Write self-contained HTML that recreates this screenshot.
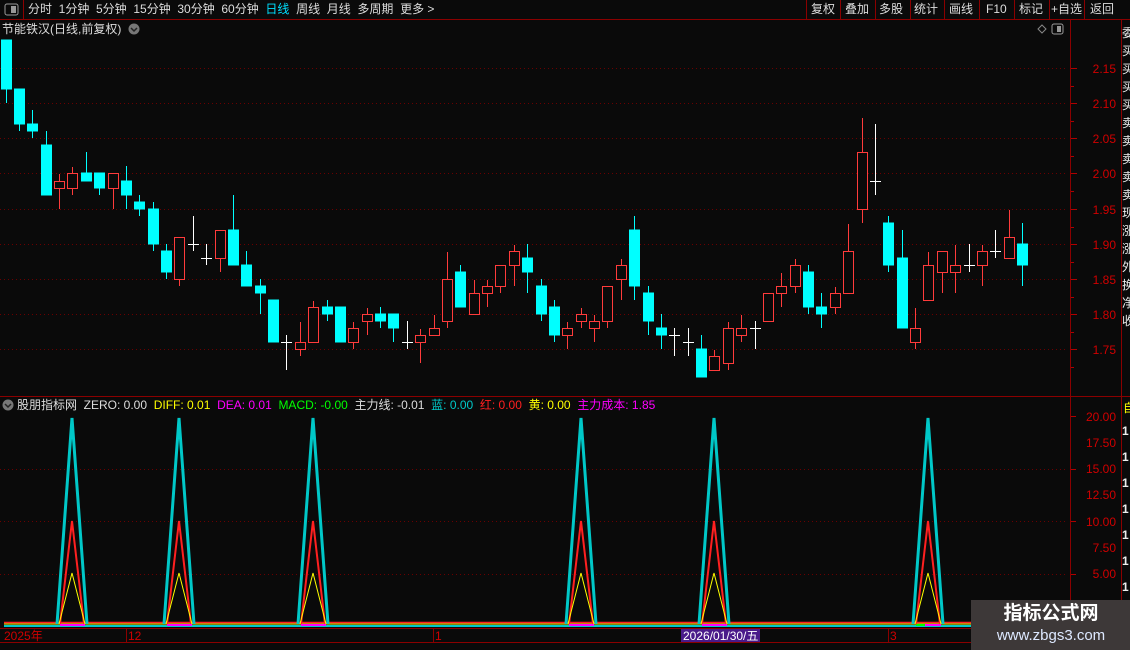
<!DOCTYPE html>
<html><head><meta charset="utf-8"><style>
body{margin:0;background:#0a0a0a;width:1130px;height:650px;overflow:hidden;position:relative;font-family:"Liberation Sans","Noto Sans CJK SC",sans-serif;color:#ddd}
.t{position:absolute;font-size:12px;white-space:nowrap;line-height:14px}
svg{position:absolute;left:0;top:0}
</style></head><body>
<svg width="1130" height="650" xmlns="http://www.w3.org/2000/svg" font-family="Liberation Sans, Noto Sans CJK SC, sans-serif">
<!-- toolbar borders -->
<line x1="0" y1="19.5" x2="1130" y2="19.5" stroke="#8b0000"/>
<line x1="23.5" y1="0" x2="23.5" y2="19" stroke="#8b0000"/>
<g stroke="#8b0000">
<line x1="806.5" y1="0" x2="806.5" y2="19"/><line x1="840.5" y1="0" x2="840.5" y2="19"/><line x1="875.5" y1="0" x2="875.5" y2="19"/><line x1="910.5" y1="0" x2="910.5" y2="19"/><line x1="944.5" y1="0" x2="944.5" y2="19"/><line x1="979.5" y1="0" x2="979.5" y2="19"/><line x1="1014.5" y1="0" x2="1014.5" y2="19"/><line x1="1049.5" y1="0" x2="1049.5" y2="19"/><line x1="1084.5" y1="0" x2="1084.5" y2="19"/>
<line x1="1070.5" y1="20" x2="1070.5" y2="642"/>
<line x1="1121.5" y1="20" x2="1121.5" y2="642"/>
<line x1="0" y1="396.5" x2="1130" y2="396.5"/>
<line x1="0" y1="628.5" x2="1130" y2="628.5"/>
<line x1="0" y1="642.5" x2="1130" y2="642.5"/>
<line x1="126.5" y1="629" x2="126.5" y2="642"/><line x1="433.5" y1="629" x2="433.5" y2="642"/><line x1="888.5" y1="629" x2="888.5" y2="642"/>
</g>
<!-- icon -->
<rect x="5" y="4" width="13" height="11" rx="2" fill="none" stroke="#999"/><rect x="11" y="6" width="5" height="7" fill="#999"/>
<rect x="1052" y="24" width="11" height="10" rx="2" fill="none" stroke="#999"/><rect x="1057" y="26" width="4" height="6" fill="#999"/>
<path d="M1042 25 L1046 29 L1042 33 L1038 29Z" fill="none" stroke="#888"/>
<circle cx="134" cy="29" r="5.5" fill="#777"/><path d="M131 28 L134 31 L137 28" stroke="#222" fill="none" stroke-width="1.5"/>
<circle cx="8" cy="405" r="5.5" fill="#777"/><path d="M5 404 L8 407 L11 404" stroke="#222" fill="none" stroke-width="1.5"/>
<!-- grid -->
<g stroke="#6a0000" stroke-dasharray="1,3">
<line x1="0" y1="68.5" x2="1068" y2="68.5"/><line x1="0" y1="103.5" x2="1068" y2="103.5"/><line x1="0" y1="138.5" x2="1068" y2="138.5"/><line x1="0" y1="173.5" x2="1068" y2="173.5"/><line x1="0" y1="209.5" x2="1068" y2="209.5"/><line x1="0" y1="244.5" x2="1068" y2="244.5"/><line x1="0" y1="279.5" x2="1068" y2="279.5"/><line x1="0" y1="314.5" x2="1068" y2="314.5"/><line x1="0" y1="349.5" x2="1068" y2="349.5"/>
<line x1="0" y1="469.5" x2="1068" y2="469.5"/><line x1="0" y1="521.5" x2="1068" y2="521.5"/><line x1="0" y1="574.5" x2="1068" y2="574.5"/>
</g>
<!-- axis ticks -->
<g stroke="#b00000">
<line x1="1071" y1="68.5" x2="1077" y2="68.5"/><line x1="1071" y1="103.5" x2="1077" y2="103.5"/><line x1="1071" y1="138.5" x2="1077" y2="138.5"/><line x1="1071" y1="173.5" x2="1077" y2="173.5"/><line x1="1071" y1="209.5" x2="1077" y2="209.5"/><line x1="1071" y1="244.5" x2="1077" y2="244.5"/><line x1="1071" y1="279.5" x2="1077" y2="279.5"/><line x1="1071" y1="314.5" x2="1077" y2="314.5"/><line x1="1071" y1="349.5" x2="1077" y2="349.5"/>
<line x1="1071" y1="86.5" x2="1074" y2="86.5"/><line x1="1071" y1="121.5" x2="1074" y2="121.5"/><line x1="1071" y1="156.5" x2="1074" y2="156.5"/><line x1="1071" y1="191.5" x2="1074" y2="191.5"/><line x1="1071" y1="227.5" x2="1074" y2="227.5"/><line x1="1071" y1="262.5" x2="1074" y2="262.5"/><line x1="1071" y1="297.5" x2="1074" y2="297.5"/><line x1="1071" y1="332.5" x2="1074" y2="332.5"/><line x1="1071" y1="367.5" x2="1074" y2="367.5"/>
<line x1="1071" y1="416.5" x2="1076" y2="416.5"/><line x1="1071" y1="469.5" x2="1076" y2="469.5"/><line x1="1071" y1="521.5" x2="1076" y2="521.5"/><line x1="1071" y1="574.5" x2="1076" y2="574.5"/>
</g>
<g fill="#d00000" font-size="12" text-anchor="end">
<text x="1116" y="73">2.15</text><text x="1116" y="108">2.10</text><text x="1116" y="143">2.05</text><text x="1116" y="178">2.00</text><text x="1116" y="214">1.95</text><text x="1116" y="249">1.90</text><text x="1116" y="284">1.85</text><text x="1116" y="319">1.80</text><text x="1116" y="354">1.75</text>
<text x="1116" y="421">20.00</text><text x="1116" y="447">17.50</text><text x="1116" y="473">15.00</text><text x="1116" y="499">12.50</text><text x="1116" y="526">10.00</text><text x="1116" y="552">7.50</text><text x="1116" y="578">5.00</text>
</g>
<!-- candles -->
<g stroke="#00ffff" fill="#00ffff">
<line x1="6.5" y1="40" x2="6.5" y2="103"/><rect x="1.5" y="40" width="10" height="49"/>
<line x1="19.5" y1="89" x2="19.5" y2="131"/><rect x="14.5" y="89" width="10" height="35"/>
<line x1="32.5" y1="110" x2="32.5" y2="138"/><rect x="27.5" y="124" width="10" height="7"/>
<line x1="46.5" y1="131" x2="46.5" y2="195"/><rect x="41.5" y="145" width="10" height="50"/>
<line x1="86.5" y1="152" x2="86.5" y2="181"/><rect x="81.5" y="173" width="10" height="8"/>
<line x1="99.5" y1="173" x2="99.5" y2="195"/><rect x="94.5" y="173" width="10" height="15"/>
<line x1="126.5" y1="166" x2="126.5" y2="209"/><rect x="121.5" y="181" width="10" height="14"/>
<line x1="139.5" y1="195" x2="139.5" y2="216"/><rect x="134.5" y="202" width="10" height="7"/>
<line x1="153.5" y1="202" x2="153.5" y2="251"/><rect x="148.5" y="209" width="10" height="35"/>
<line x1="166.5" y1="244" x2="166.5" y2="279"/><rect x="161.5" y="251" width="10" height="21"/>
<line x1="233.5" y1="195" x2="233.5" y2="265"/><rect x="228.5" y="230" width="10" height="35"/>
<line x1="246.5" y1="251" x2="246.5" y2="286"/><rect x="241.5" y="265" width="10" height="21"/>
<line x1="260.5" y1="279" x2="260.5" y2="314"/><rect x="255.5" y="286" width="10" height="7"/>
<rect x="268.5" y="300" width="10" height="42"/>
<line x1="327.5" y1="300" x2="327.5" y2="321"/><rect x="322.5" y="307" width="10" height="7"/>
<rect x="335.5" y="307" width="10" height="35"/>
<line x1="380.5" y1="307" x2="380.5" y2="328"/><rect x="375.5" y="314" width="10" height="7"/>
<line x1="393.5" y1="314" x2="393.5" y2="342"/><rect x="388.5" y="314" width="10" height="14"/>
<line x1="460.5" y1="265" x2="460.5" y2="307"/><rect x="455.5" y="272" width="10" height="35"/>
<line x1="527.5" y1="244" x2="527.5" y2="293"/><rect x="522.5" y="258" width="10" height="14"/>
<line x1="541.5" y1="279" x2="541.5" y2="321"/><rect x="536.5" y="286" width="10" height="28"/>
<line x1="554.5" y1="300" x2="554.5" y2="342"/><rect x="549.5" y="307" width="10" height="28"/>
<line x1="634.5" y1="216" x2="634.5" y2="300"/><rect x="629.5" y="230" width="10" height="56"/>
<line x1="648.5" y1="286" x2="648.5" y2="335"/><rect x="643.5" y="293" width="10" height="28"/>
<line x1="661.5" y1="314" x2="661.5" y2="349"/><rect x="656.5" y="328" width="10" height="7"/>
<line x1="701.5" y1="335" x2="701.5" y2="377"/><rect x="696.5" y="349" width="10" height="28"/>
<line x1="808.5" y1="265" x2="808.5" y2="314"/><rect x="803.5" y="272" width="10" height="35"/>
<line x1="821.5" y1="293" x2="821.5" y2="328"/><rect x="816.5" y="307" width="10" height="7"/>
<line x1="888.5" y1="216" x2="888.5" y2="272"/><rect x="883.5" y="223" width="10" height="42"/>
<line x1="902.5" y1="230" x2="902.5" y2="328"/><rect x="897.5" y="258" width="10" height="70"/>
<line x1="1022.5" y1="223" x2="1022.5" y2="286"/><rect x="1017.5" y="244" width="10" height="21"/>
</g>
<g stroke="#ff3b3b" fill="#0a0a0a">
<line x1="59.5" y1="174" x2="59.5" y2="209"/><rect x="54.5" y="181.5" width="10" height="7"/>
<line x1="72.5" y1="167" x2="72.5" y2="195"/><rect x="67.5" y="173.5" width="10" height="15"/>
<line x1="113.5" y1="173" x2="113.5" y2="209"/><rect x="108.5" y="173.5" width="10" height="15"/>
<line x1="179.5" y1="237" x2="179.5" y2="286"/><rect x="174.5" y="237.5" width="10" height="42"/>
<line x1="220.5" y1="230" x2="220.5" y2="272"/><rect x="215.5" y="230.5" width="10" height="28"/>
<line x1="300.5" y1="322" x2="300.5" y2="356"/><rect x="295.5" y="342.5" width="10" height="7"/>
<line x1="313.5" y1="301" x2="313.5" y2="342"/><rect x="308.5" y="307.5" width="10" height="35"/>
<line x1="353.5" y1="322" x2="353.5" y2="349"/><rect x="348.5" y="328.5" width="10" height="14"/>
<line x1="367.5" y1="308" x2="367.5" y2="335"/><rect x="362.5" y="314.5" width="10" height="7"/>
<line x1="420.5" y1="329" x2="420.5" y2="363"/><rect x="415.5" y="335.5" width="10" height="7"/>
<line x1="434.5" y1="315" x2="434.5" y2="335"/><rect x="429.5" y="328.5" width="10" height="7"/>
<line x1="447.5" y1="252" x2="447.5" y2="328"/><rect x="442.5" y="279.5" width="10" height="42"/>
<line x1="474.5" y1="280" x2="474.5" y2="314"/><rect x="469.5" y="293.5" width="10" height="21"/>
<line x1="487.5" y1="280" x2="487.5" y2="307"/><rect x="482.5" y="286.5" width="10" height="7"/>
<line x1="500.5" y1="265" x2="500.5" y2="293"/><rect x="495.5" y="265.5" width="10" height="21"/>
<line x1="514.5" y1="245" x2="514.5" y2="286"/><rect x="509.5" y="251.5" width="10" height="14"/>
<line x1="567.5" y1="322" x2="567.5" y2="349"/><rect x="562.5" y="328.5" width="10" height="7"/>
<line x1="581.5" y1="308" x2="581.5" y2="328"/><rect x="576.5" y="314.5" width="10" height="7"/>
<line x1="594.5" y1="315" x2="594.5" y2="342"/><rect x="589.5" y="321.5" width="10" height="7"/>
<line x1="607.5" y1="286" x2="607.5" y2="328"/><rect x="602.5" y="286.5" width="10" height="35"/>
<line x1="621.5" y1="259" x2="621.5" y2="300"/><rect x="616.5" y="265.5" width="10" height="14"/>
<line x1="714.5" y1="350" x2="714.5" y2="370"/><rect x="709.5" y="356.5" width="10" height="14"/>
<line x1="728.5" y1="322" x2="728.5" y2="370"/><rect x="723.5" y="328.5" width="10" height="35"/>
<line x1="741.5" y1="315" x2="741.5" y2="342"/><rect x="736.5" y="328.5" width="10" height="7"/>
<line x1="768.5" y1="293" x2="768.5" y2="321"/><rect x="763.5" y="293.5" width="10" height="28"/>
<line x1="781.5" y1="273" x2="781.5" y2="307"/><rect x="776.5" y="286.5" width="10" height="7"/>
<line x1="795.5" y1="259" x2="795.5" y2="293"/><rect x="790.5" y="265.5" width="10" height="21"/>
<line x1="835.5" y1="287" x2="835.5" y2="314"/><rect x="830.5" y="293.5" width="10" height="14"/>
<line x1="848.5" y1="224" x2="848.5" y2="293"/><rect x="843.5" y="251.5" width="10" height="42"/>
<line x1="862.5" y1="118" x2="862.5" y2="223"/><rect x="857.5" y="152.5" width="10" height="57"/>
<line x1="915.5" y1="308" x2="915.5" y2="349"/><rect x="910.5" y="328.5" width="10" height="14"/>
<line x1="928.5" y1="252" x2="928.5" y2="300"/><rect x="923.5" y="265.5" width="10" height="35"/>
<line x1="942.5" y1="251" x2="942.5" y2="293"/><rect x="937.5" y="251.5" width="10" height="21"/>
<line x1="955.5" y1="245" x2="955.5" y2="293"/><rect x="950.5" y="265.5" width="10" height="7"/>
<line x1="982.5" y1="245" x2="982.5" y2="286"/><rect x="977.5" y="251.5" width="10" height="14"/>
<line x1="1009.5" y1="210" x2="1009.5" y2="258"/><rect x="1004.5" y="237.5" width="10" height="21"/>
</g>
<g stroke="#ffffff">
<line x1="193.5" y1="216" x2="193.5" y2="251"/><line x1="188" y1="244.5" x2="199" y2="244.5"/>
<line x1="206.5" y1="244" x2="206.5" y2="265"/><line x1="201" y1="258.5" x2="212" y2="258.5"/>
<line x1="286.5" y1="335" x2="286.5" y2="370"/><line x1="281" y1="342.5" x2="292" y2="342.5"/>
<line x1="407.5" y1="321" x2="407.5" y2="349"/><line x1="402" y1="342.5" x2="413" y2="342.5"/>
<line x1="674.5" y1="328" x2="674.5" y2="356"/><line x1="669" y1="335.5" x2="680" y2="335.5"/>
<line x1="688.5" y1="328" x2="688.5" y2="356"/><line x1="683" y1="342.5" x2="694" y2="342.5"/>
<line x1="755.5" y1="321" x2="755.5" y2="349"/><line x1="750" y1="328.5" x2="761" y2="328.5"/>
<line x1="875.5" y1="124" x2="875.5" y2="195"/><line x1="870" y1="181.5" x2="881" y2="181.5"/>
<line x1="969.5" y1="244" x2="969.5" y2="272"/><line x1="964" y1="265.5" x2="975" y2="265.5"/>
<line x1="995.5" y1="230" x2="995.5" y2="258"/><line x1="990" y1="251.5" x2="1001" y2="251.5"/>
</g>
<!-- lower panel baselines -->
<line x1="4" y1="622.5" x2="1068" y2="622.5" stroke="#ff2020" stroke-width="1.5"/>
<line x1="4" y1="624" x2="1068" y2="624" stroke="#ffff00"/>
<line x1="4" y1="626" x2="1068" y2="626" stroke="#00c8c8" stroke-width="2"/>
<g stroke="#ff00ff" stroke-width="2">
<line x1="60" y1="625" x2="85" y2="625"/><line x1="167" y1="625" x2="192" y2="625"/><line x1="301" y1="625" x2="326" y2="625"/><line x1="569" y1="625" x2="594" y2="625"/><line x1="702" y1="625" x2="727" y2="625"/><line x1="916" y1="625" x2="941" y2="625"/>
</g>
<line x1="916" y1="625" x2="925" y2="625" stroke="#00ff00" stroke-width="2"/>
<!-- peaks -->
<g fill="none" stroke-linejoin="miter">
<g stroke="#00c8c8" stroke-width="3">
<path d="M57 624 L72 418 L87 624"/><path d="M164 624 L179 418 L194 624"/><path d="M298 624 L313 418 L328 624"/><path d="M566 624 L581 418 L596 624"/><path d="M699 624 L714 418 L729 624"/><path d="M913 624 L928 418 L943 624"/>
</g>
<g stroke="#ff2020" stroke-width="2">
<path d="M60 624 L72 521 L84 624"/><path d="M167 624 L179 521 L191 624"/><path d="M301 624 L313 521 L325 624"/><path d="M569 624 L581 521 L593 624"/><path d="M702 624 L714 521 L726 624"/><path d="M916 624 L928 521 L940 624"/>
</g>
<g stroke="#ffff00" stroke-width="1">
<path d="M59 624 L72 573 L85 624"/><path d="M166 624 L179 573 L192 624"/><path d="M300 624 L313 573 L326 624"/><path d="M568 624 L581 573 L594 624"/><path d="M701 624 L714 573 L727 624"/><path d="M915 624 L928 573 L941 624"/>
</g>
</g>
<!-- date box -->
<rect x="681" y="629" width="79" height="13" fill="#4a1a8a"/>
<!-- watermark -->
<rect x="971" y="600" width="159" height="50" fill="#3d3838"/>
</svg>
<div class="t" style="left:28px;top:2px;color:#ddd">分时&nbsp;&nbsp;1分钟&nbsp;&nbsp;5分钟&nbsp;&nbsp;15分钟&nbsp;&nbsp;30分钟&nbsp;&nbsp;60分钟&nbsp;&nbsp;<span style="color:#00e0ff">日线</span>&nbsp;&nbsp;周线&nbsp;&nbsp;月线&nbsp;&nbsp;多周期&nbsp;&nbsp;更多 &gt;</div>
<div class="t" style="left:811px;top:2px">复权</div><div class="t" style="left:845px;top:2px">叠加</div><div class="t" style="left:879px;top:2px">多股</div><div class="t" style="left:914px;top:2px">统计</div><div class="t" style="left:949px;top:2px">画线</div><div class="t" style="left:986px;top:2px">F10</div><div class="t" style="left:1019px;top:2px">标记</div><div class="t" style="left:1051px;top:2px">+自选</div><div class="t" style="left:1090px;top:2px">返回</div>
<div class="t" style="left:2px;top:22px">节能铁汉(日线,前复权)</div>
<div class="t" style="left:17px;top:398px">股朋指标网&nbsp;&nbsp;ZERO: 0.00&nbsp;&nbsp;<span style="color:#ffff00">DIFF: 0.01</span>&nbsp;&nbsp;<span style="color:#ff00ff">DEA: 0.01</span>&nbsp;&nbsp;<span style="color:#00ff00">MACD: -0.00</span>&nbsp;&nbsp;主力线: -0.01&nbsp;&nbsp;<span style="color:#00c8c8">蓝: 0.00</span>&nbsp;&nbsp;<span style="color:#ff2020">红: 0.00</span>&nbsp;&nbsp;<span style="color:#ffff00">黄: 0.00</span>&nbsp;&nbsp;<span style="color:#ff00ff">主力成本: 1.85</span></div>
<div class="t" style="left:4px;top:629px;color:#d00000">2025年</div>
<div class="t" style="left:128px;top:629px;color:#d00000">12</div>
<div class="t" style="left:435px;top:629px;color:#d00000">1</div>
<div class="t" style="left:683px;top:629px;color:#fff">2026/01/30/五</div>
<div class="t" style="left:890px;top:629px;color:#d00000">3</div>
<div class="t" style="left:1122px;top:24px;width:8px;overflow:hidden;line-height:18px;color:#eee">委<br>买<br>买<br>买<br>买<br>卖<br>卖<br>卖<br>卖<br>卖<br>现<br>涨<br>涨<br>外<br>换<br>净<br>收</div>
<div class="t" style="left:1123px;top:399px;width:7px;overflow:hidden;line-height:18px;color:#ff0">自</div>
<div class="t" style="left:1122px;top:418px;width:8px;overflow:hidden;line-height:26px;color:#eee;font-weight:bold">1<br>1<br>1<br>1<br>1<br>1<br>1</div>
<div class="t" style="left:976px;top:603px;width:150px;text-align:center;font-size:19px;line-height:22px;font-weight:bold;color:#fff">指标公式网</div>
<div class="t" style="left:976px;top:627px;width:150px;text-align:center;font-size:15px;line-height:18px;color:#dde8ff">www.zbgs3.com</div>
</body></html>
